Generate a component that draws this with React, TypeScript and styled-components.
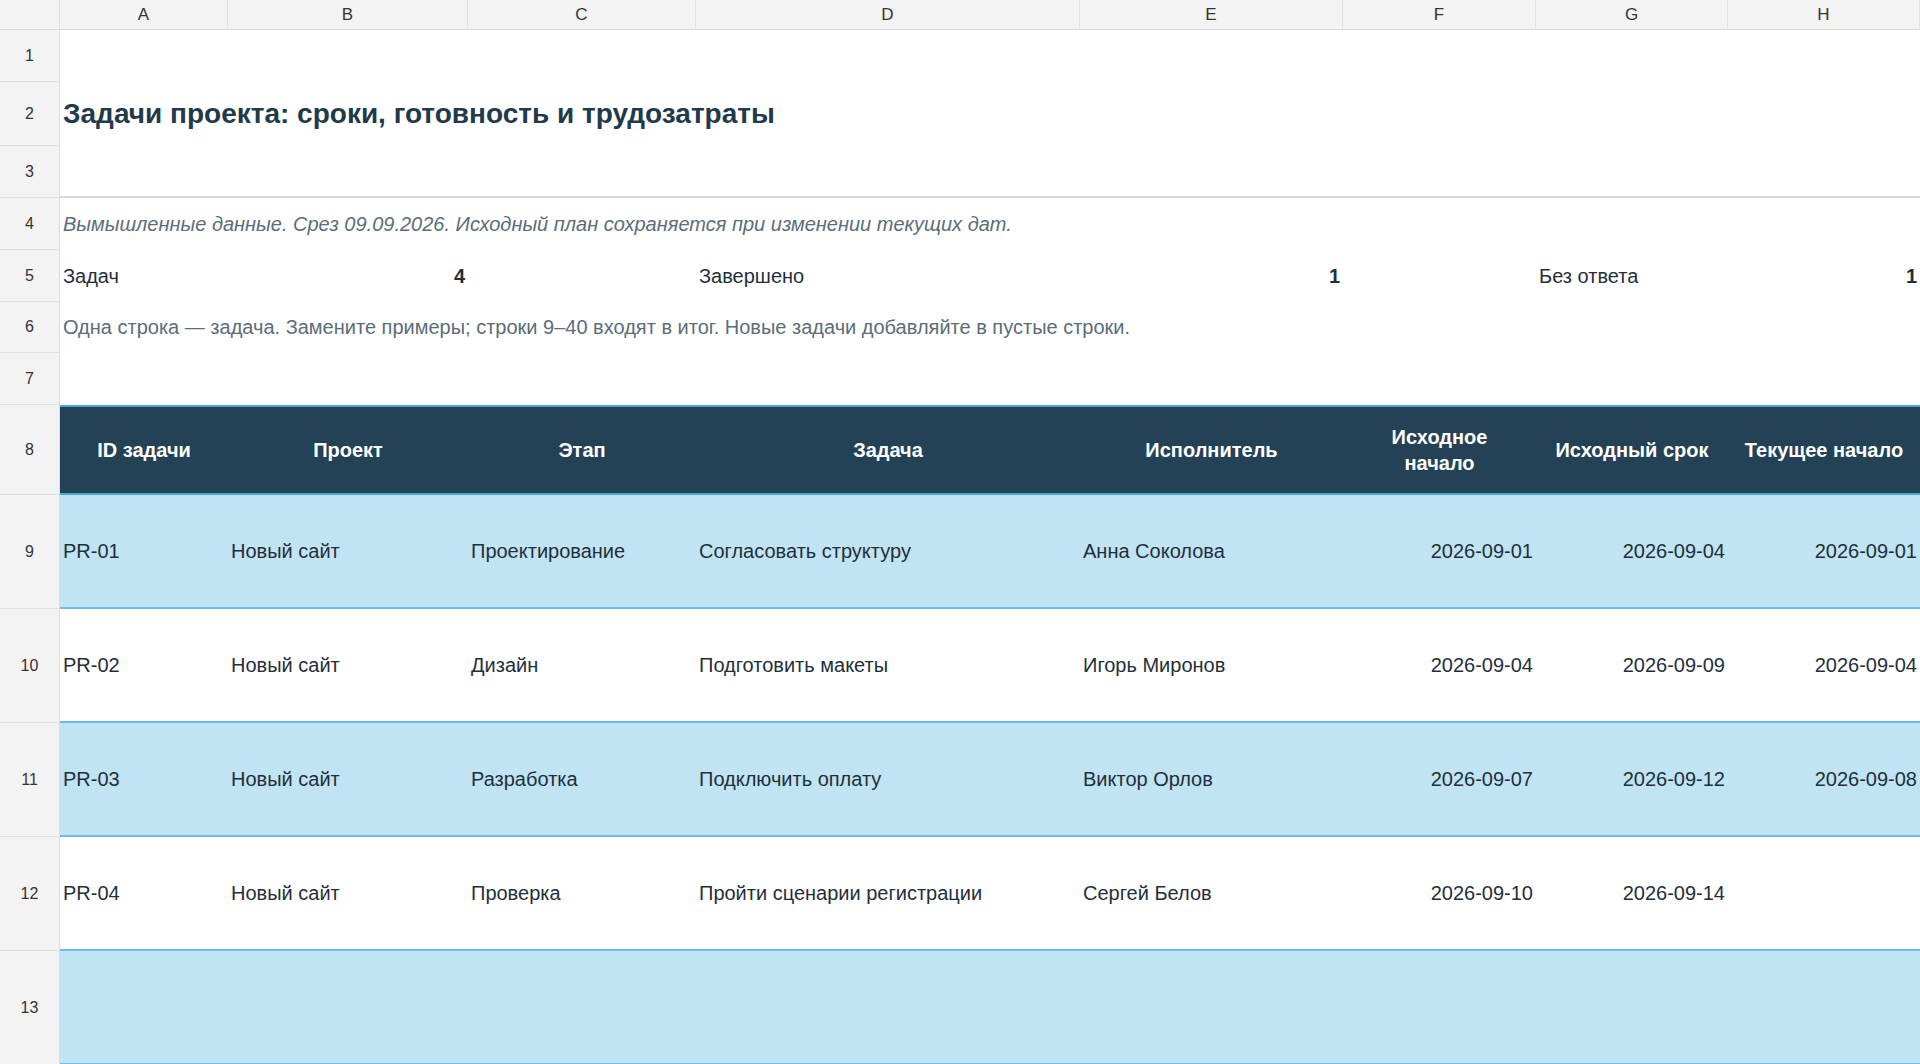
import React from "react";
import styled, { createGlobalStyle } from "styled-components";

const Global = createGlobalStyle`
  html, body { margin: 0; padding: 0; background: #fff; overflow: hidden; }
  body { font-family: "Liberation Sans", Arial, sans-serif; }
`;

const COLS = "60px 168px 240px 228px 384px 263px 193px 192px 192px";

const Sheet = styled.div`
  display: grid;
  grid-template-columns: ${COLS};
  width: 1920px;
  height: 1064px;
  overflow: hidden;
  grid-template-rows: 30px 52px 64px 52px 52px 52px 51px 52px 90px 114px 114px 114px 114px 114px;
`;

const ColHead = styled.div`
  background: #f3f3f3;
  border-right: 1px solid #e2e2e2;
  border-bottom: 1px solid #dcdcdc;
  color: #333;
  font-size: 17px;
  display: flex;
  align-items: center;
  justify-content: center;
`;

const RowHead = styled.div`
  background: #f3f3f3;
  border-right: 1px solid #dcdcdc;
  border-bottom: 1px solid #e2e2e2;
  color: #333;
  font-size: 16px;
  display: flex;
  align-items: center;
  justify-content: center;
`;

const Cell = styled.div<{ $span?: number; $align?: string; $bg?: string; $line?: string; $bold?: boolean }>`
  grid-column: span ${(p) => p.$span || 1};
  background: ${(p) => p.$bg || "#fff"};
  border-bottom: ${(p) => (p.$line ? `2px solid ${p.$line}` : "none")};
  display: flex;
  align-items: center;
  justify-content: ${(p) => p.$align || "flex-start"};
  padding: 0 3px;
  font-size: 20px;
  color: #1f2f3a;
  font-weight: ${(p) => (p.$bold ? 700 : 400)};
  white-space: nowrap;
  overflow: hidden;
  box-sizing: border-box;
`;

const Title = styled(Cell)`
  font-size: 28px;
  font-weight: 700;
  color: #1f3a4a;
`;

const Note = styled(Cell)<{ $italic?: boolean }>`
  color: #5b6d78;
  font-style: ${(p) => (p.$italic ? "italic" : "normal")};
`;

const Head = styled(Cell)`
  background: #244255;
  color: #fff;
  font-weight: 700;
  justify-content: center;
  text-align: center;
  white-space: normal;
  line-height: 26px;
  border-top: 2px solid #4aa6d6;
  border-bottom: 2px solid #4aa6d6;
`;

const rows = [
  ["PR-01", "Новый сайт", "Проектирование", "Согласовать структуру", "Анна Соколова", "2026-09-01", "2026-09-04", "2026-09-01"],
  ["PR-02", "Новый сайт", "Дизайн", "Подготовить макеты", "Игорь Миронов", "2026-09-04", "2026-09-09", "2026-09-04"],
  ["PR-03", "Новый сайт", "Разработка", "Подключить оплату", "Виктор Орлов", "2026-09-07", "2026-09-12", "2026-09-08"],
  ["PR-04", "Новый сайт", "Проверка", "Пройти сценарии регистрации", "Сергей Белов", "2026-09-10", "2026-09-14", ""],
  ["", "", "", "", "", "", "", ""],
];

const heads = ["ID задачи", "Проект", "Этап", "Задача", "Исполнитель", "Исходное начало", "Исходный срок", "Текущее начало"];

export default function App() {
  return (
    <>
      <Global />
      <Sheet>
        <ColHead />
        {"ABCDEFGH".split("").map((c) => (
          <ColHead key={c}>{c}</ColHead>
        ))}
        <RowHead>1</RowHead>
        <Cell $span={8} />
        <RowHead>2</RowHead>
        <Title $span={8}>Задачи проекта: сроки, готовность и трудозатраты</Title>
        <RowHead>3</RowHead>
        <Cell $span={8} $line="#d5dbe1" />
        <RowHead>4</RowHead>
        <Note $span={8} $italic>
          Вымышленные данные. Срез 09.09.2026. Исходный план сохраняется при изменении текущих дат.
        </Note>
        <RowHead>5</RowHead>
        <Cell>Задач</Cell>
        <Cell $align="flex-end" $bold>4</Cell>
        <Cell />
        <Cell>Завершено</Cell>
        <Cell $align="flex-end" $bold>1</Cell>
        <Cell />
        <Cell>Без ответа</Cell>
        <Cell $align="flex-end" $bold>1</Cell>
        <RowHead>6</RowHead>
        <Note $span={8}>
          Одна строка — задача. Замените примеры; строки 9–40 входят в итог. Новые задачи добавляйте в пустые строки.
        </Note>
        <RowHead>7</RowHead>
        <Cell $span={8} />
        <RowHead>8</RowHead>
        {heads.map((h) => (
          <Head key={h}>{h === "Исходное начало" ? <span style={{ maxWidth: 110 }}>{h}</span> : h}</Head>
        ))}
        {rows.map((r, i) => (
          <React.Fragment key={i}>
            <RowHead>{9 + i}</RowHead>
            {r.map((v, j) => (
              <Cell
                key={j}
                $bg={i % 2 === 0 ? "#c1e4f4" : "#fff"}
                $line="#6cbce6"
                $align={j >= 5 ? "flex-end" : "flex-start"}
              >
                {v}
              </Cell>
            ))}
          </React.Fragment>
        ))}
      </Sheet>
    </>
  );
}
